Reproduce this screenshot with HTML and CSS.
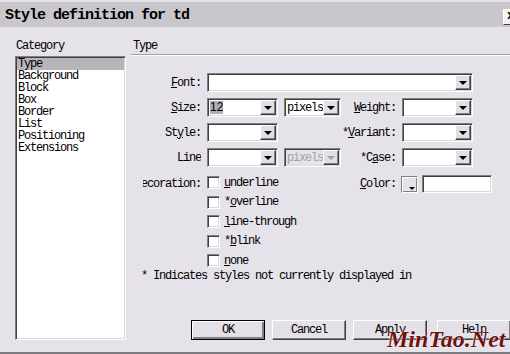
FILE: index.html
```html
<!DOCTYPE html>
<html>
<head>
  <title>Style definition for td</title>
  <link rel="stylesheet" href="styles.css">
</head>
<body>
  <div class="titlebar">
    <span class="title">Style definition for td</span>
    <span class="close">x</span>
  </div>

  <div class="main">
    <div class="left">
      <div class="caption">Category</div>
      <ul class="listbox">
        <li class="selected">Type</li>
        <li>Background</li>
        <li>Block</li>
        <li>Box</li>
        <li>Border</li>
        <li>List</li>
        <li>Positioning</li>
        <li>Extensions</li>
      </ul>
    </div>

    <div class="right">
      <div class="section-head">Type</div>

      <div class="form">
        <div class="label clip"><span><u>F</u>ont:</span></div>
        <div class="select span-all"><span class="value"></span><span class="arrow"></span></div>

        <div class="label clip"><span><u>S</u>ize:</span></div>
        <div class="select"><span class="value"><span class="picked">12</span></span><span class="arrow"></span></div>
        <div class="select"><span class="value">pixels</span><span class="arrow"></span></div>
        <div class="label"><span><u>W</u>eight:</span></div>
        <div class="select"><span class="value"></span><span class="arrow"></span></div>

        <div class="label clip"><span>St<u>y</u>le:</span></div>
        <div class="select"><span class="value"></span><span class="arrow"></span></div>
        <div></div>
        <div class="label"><span>*<u>V</u>ariant:</span></div>
        <div class="select"><span class="value"></span><span class="arrow"></span></div>

        <div class="label clip"><span>Line</span></div>
        <div class="select"><span class="value"></span><span class="arrow"></span></div>
        <div class="select disabled"><span class="value">pixels</span><span class="arrow"></span></div>
        <div class="label"><span>*C<u>a</u>se:</span></div>
        <div class="select"><span class="value"></span><span class="arrow"></span></div>
      </div>

      <div class="form deco">
        <div class="label clip"><span>Decoration:</span></div>
        <div class="checks">
          <label class="check"><span class="box"></span><span><u>u</u>nderline</span></label>
          <label class="check"><span class="box"></span><span>*<u>o</u>verline</span></label>
          <label class="check"><span class="box"></span><span><u>l</u>ine-through</span></label>
          <label class="check"><span class="box"></span><span>*<u>b</u>link</span></label>
          <label class="check"><span class="box"></span><span><u>n</u>one</span></label>
        </div>
        <div class="label color-label"><span><u>C</u>olor:</span></div>
        <div class="color">
          <span class="swatch"><span class="swatch-arrow"></span></span>
          <span class="color-input"></span>
        </div>
      </div>

      <div class="note">* Indicates styles not currently displayed in</div>

      <div class="buttons">
        <button class="btn default">OK</button>
        <button class="btn">Cancel</button>
        <button class="btn">Apply</button>
        <button class="btn help">Help</button>
      </div>
    </div>
  </div>

  <div class="bottom-line"></div>

  <div class="watermark">MinTao.Net</div>
</body>
</html>
```

FILE: styles.css
```css
body {
  margin: 0;
  width: 510px;
  height: 354px;
  overflow: hidden;
  position: relative;
  background-color: #e6e2e9;
  color: #000;
  font-family: "Liberation Mono", monospace;
  font-size: 12px;
  letter-spacing: -1.2px;
  line-height: 12px;
}

u {
  text-decoration: underline;
  text-underline-offset: 1px;
}

/* title bar */
.titlebar {
  margin-top: 2px;
  height: 25px;
  background-color: #c9c7cc;
  display: flex;
  align-items: center;
  justify-content: space-between;
  padding-left: 5px;
}

.title {
  font-size: 15px;
  font-weight: bold;
  letter-spacing: -1px;
  padding-top: 2px;
}

.close {
  width: 16px;
  height: 16px;
  margin-right: -9px;
  margin-top: 4px;
  box-sizing: border-box;
  background-color: #f4f2f4;
  border: 1px solid;
  border-color: #fff #404040 #404040 #fff;
  font-weight: bold;
  font-size: 12px;
  line-height: 13px;
  padding-left: 3px;
}

/* layout */
.main {
  display: flex;
  padding: 13px 0 0 15px;
}

.left {
  width: 111px;
  display: flex;
  flex-direction: column;
}

.caption {
  padding-left: 1px;
  margin-bottom: 4px;
}

.listbox {
  list-style: none;
  margin: 0;
  padding: 1px 1px 0;
  height: 284px;
  box-sizing: border-box;
  background-color: #fff;
  border: 1px solid;
  border-color: #808080 #fff #fff #808080;
  box-shadow: inset 1px 1px #404040, inset -1px -1px #dcd8de;
}

.listbox li {
  padding-left: 1px;
  height: 12px;
}

.listbox li.selected {
  background-color: #b7b5ba;
}

.right {
  flex: 1;
  margin-left: 5px;
  display: flex;
  flex-direction: column;
  min-width: 0;
}

.section-head {
  padding: 0 0 2px 2px;
  border-bottom: 1px solid #a3a1a6;
  box-shadow: 0 1px #fff;
}

/* form grid */
.form {
  display: grid;
  grid-template-columns: 58px 71px 57px 49px 71px;
  grid-auto-rows: 19px;
  column-gap: 6px;
  row-gap: 6px;
  padding-left: 12px;
  margin-top: 18px;
}

.label {
  display: flex;
  justify-content: flex-end;
  align-items: center;
  white-space: nowrap;
}

.label.clip {
  overflow: hidden;
}

.span-all {
  grid-column: 2 / 6;
}

.select {
  box-sizing: border-box;
  height: 19px;
  background-color: #fff;
  border: 1px solid;
  border-color: #808080 #fff #fff #808080;
  box-shadow: inset 1px 1px #404040, inset -1px -1px #dcd8de;
  display: flex;
  align-items: center;
  justify-content: space-between;
  padding: 1px;
}

.select .value {
  padding-left: 1px;
  white-space: nowrap;
  overflow: hidden;
}

.picked {
  font-family: "Liberation Sans", sans-serif;
  letter-spacing: 0;
  font-size: 12px;
  background-color: #b0aeb3;
  padding: 1px 0;
}

.arrow {
  flex: none;
  width: 16px;
  height: 15px;
  box-sizing: border-box;
  background-color: #e2dfe5;
  border: 1px solid;
  border-color: #fff #404040 #404040 #fff;
  box-shadow: inset -1px -1px #808080;
  display: flex;
  align-items: center;
  justify-content: center;
}

.arrow::after {
  content: "";
  border-left: 4px solid transparent;
  border-right: 4px solid transparent;
  border-top: 4px solid #000;
  margin: 1px 1px 0 0;
}

.select.disabled {
  background-color: #e6e2e9;
  color: #a3a1a6;
}

.select.disabled .arrow::after {
  border-top-color: #a3a1a6;
}

/* decoration block */
.form.deco {
  margin-top: 6px;
  grid-auto-rows: auto;
}

.deco .label {
  align-items: flex-start;
  height: 19.5px;
  line-height: 19.5px;
  margin-top: 2px;
}

.checks {
  grid-column: 2 / 4;
  display: flex;
  flex-direction: column;
}

.check {
  height: 19.5px;
  display: flex;
  align-items: center;
  gap: 4px;
  white-space: nowrap;
}

.box {
  width: 13px;
  height: 13px;
  box-sizing: border-box;
  background-color: #fff;
  border: 1px solid;
  border-color: #808080 #fff #fff #808080;
  box-shadow: inset 1px 1px #404040, inset -1px -1px #dcd8de;
}

.color-label {
  grid-column: 4;
}

.color {
  display: flex;
  align-items: flex-start;
  gap: 4px;
  margin-left: -1px;
  margin-top: 2px;
}

.swatch {
  flex: none;
  width: 17px;
  height: 17px;
  margin-top: 1px;
  box-sizing: border-box;
  border: 1px solid;
  border-color: #808080 #fff #fff #808080;
  box-shadow: inset 1px 1px #fff, inset -1px -1px #808080;
  position: relative;
}

.swatch-arrow {
  position: absolute;
  right: 2px;
  bottom: 2px;
  border-left: 3px solid transparent;
  border-right: 3px solid transparent;
  border-top: 3px solid #000;
}

.color-input {
  flex: none;
  width: 70px;
  height: 18px;
  box-sizing: border-box;
  background-color: #fff;
  border: 1px solid;
  border-color: #808080 #fff #fff #808080;
  box-shadow: inset 1px 1px #404040, inset -1px -1px #dcd8de;
}

.note {
  margin: -1px 0 0 10px;
  white-space: nowrap;
}

/* buttons */
.buttons {
  margin-top: auto;
  display: flex;
  gap: 7px;
  padding-left: 60px;
}

.btn {
  flex: none;
  width: 74px;
  height: 20px;
  padding: 0;
  font: inherit;
  letter-spacing: -1.2px;
  color: #000;
  background-color: #e4e0e7;
  border: 1px solid;
  border-color: #fff #404040 #404040 #fff;
  box-shadow: inset -1px -1px #808080;
}

.btn.default {
  border: 1px solid #000;
  box-shadow: inset 1px 1px #fff, inset -2px -2px #808080;
}

.btn.help {
  margin-left: 3px;
}

.bottom-line {
  margin-top: 12px;
  height: 2px;
  background-color: #7c7a7f;
}

.watermark {
  position: absolute;
  left: 387px;
  top: 327px;
  font-family: "Liberation Serif", serif;
  font-style: italic;
  font-weight: bold;
  font-size: 24px;
  line-height: 24px;
  letter-spacing: 0;
  color: #6e1212;
  text-shadow: 0 0 2px #fff, 0 0 1px #fff;
}
```
